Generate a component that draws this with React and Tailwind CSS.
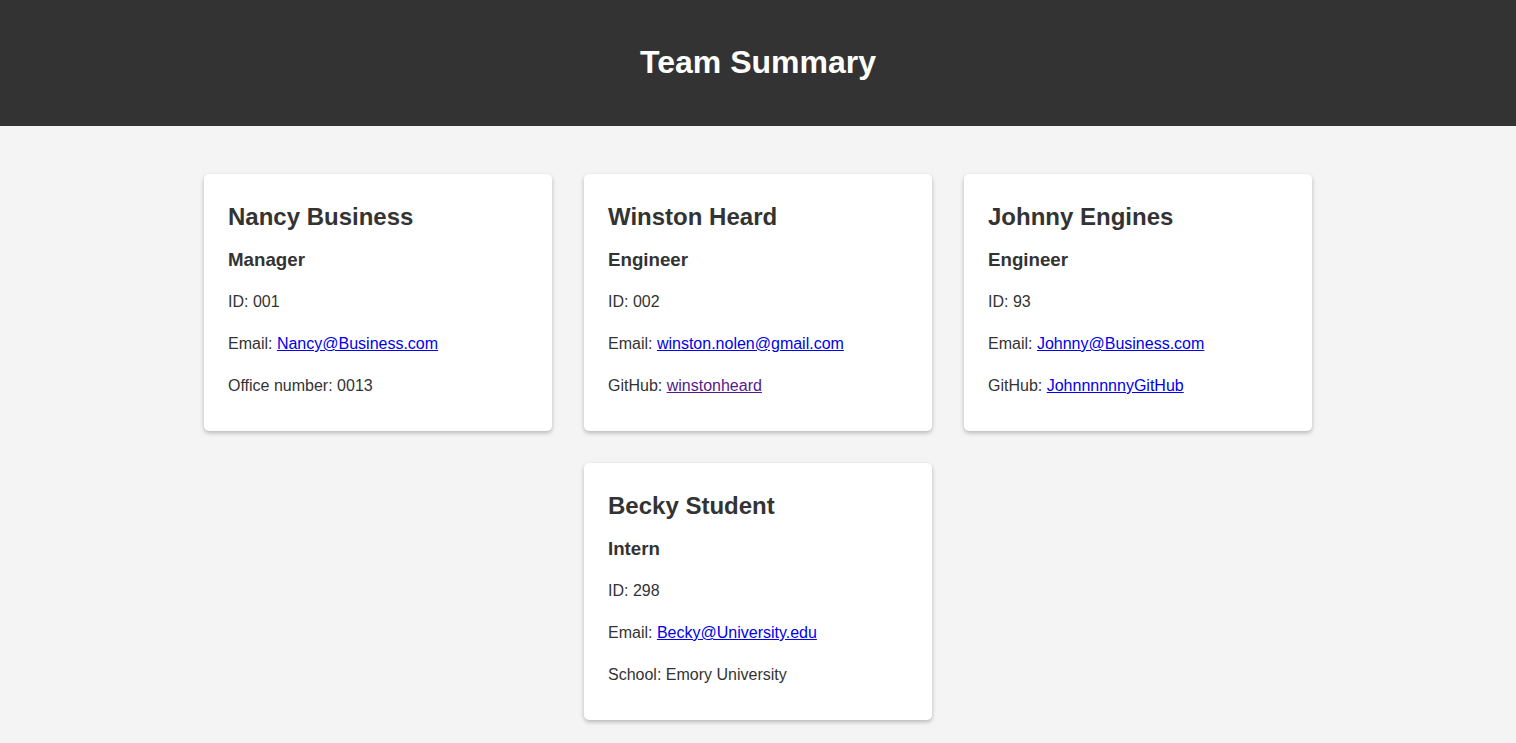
const team = [
  {
    name: 'Nancy Business',
    role: 'Manager',
    id: '001',
    email: 'Nancy@Business.com',
    extra: { label: 'Office number', value: '0013' },
  },
  {
    name: 'Winston Heard',
    role: 'Engineer',
    id: '002',
    email: 'winston.nolen@gmail.com',
    extra: { label: 'GitHub', value: 'winstonheard', link: true, visited: true },
  },
  {
    name: 'Johnny Engines',
    role: 'Engineer',
    id: '93',
    email: 'Johnny@Business.com',
    extra: { label: 'GitHub', value: 'JohnnnnnnyGitHub', link: true },
  },
  {
    name: 'Becky Student',
    role: 'Intern',
    id: '298',
    email: 'Becky@University.edu',
    extra: { label: 'School', value: 'Emory University' },
  },
];

function Card({ member }) {
  const { name, role, id, email, extra } = member;
  return (
    <div className="w-[348px] bg-white rounded-[5px] shadow-[0_2px_4px_rgba(0,0,0,0.25)] px-6 pt-6 pb-[32px]">
      <h2 className="text-[24px] font-bold leading-[38px]">{name}</h2>
      <h3 className="mt-[9px] text-[18.72px] font-bold leading-[30px]">{role}</h3>
      <div className="mt-[14px] flex flex-col gap-4 text-[16px] leading-[26px]">
        <p>ID: {id}</p>
        <p>
          Email:{' '}
          <a href={`mailto:${email}`} className="text-[#0000ee] underline">
            {email}
          </a>
        </p>
        <p>
          {extra.label}:{' '}
          {extra.link ? (
            <a
              href="#"
              className={`underline ${extra.visited ? 'text-[#551a8b]' : 'text-[#0000ee]'}`}
            >
              {extra.value}
            </a>
          ) : (
            extra.value
          )}
        </p>
      </div>
    </div>
  );
}

export default function App() {
  return (
    <div className="min-h-screen bg-[#f4f4f4] text-[#333] font-['Liberation_Sans',Arial,sans-serif]">
      <header className="h-[126px] bg-[#333] flex items-center justify-center pb-[2px]">
        <h1 className="text-white text-[32px] font-bold">Team Summary</h1>
      </header>
      <main className="pt-12 pb-6 flex flex-wrap justify-center gap-8 max-w-[1108px] mx-auto">
        {team.map((m) => (
          <Card key={m.name} member={m} />
        ))}
      </main>
    </div>
  );
}
